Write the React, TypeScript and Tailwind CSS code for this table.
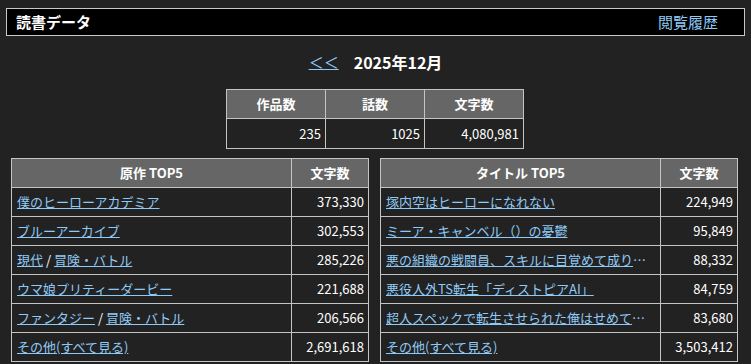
import React from 'react'

const font = { fontFamily: '"Noto Sans CJK JP", "Noto Sans", sans-serif' }

type Row = { parts: string[]; count: string }

const sourceRows: Row[] = [
  { parts: ['僕のヒーローアカデミア'], count: '373,330' },
  { parts: ['ブルーアーカイブ'], count: '302,553' },
  { parts: ['現代', '冒険・バトル'], count: '285,226' },
  { parts: ['ウマ娘プリティーダービー'], count: '221,688' },
  { parts: ['ファンタジー', '冒険・バトル'], count: '206,566' },
  { parts: ['その他(すべて見る)'], count: '2,691,618' },
]

const titleRows: Row[] = [
  { parts: ['塚内空はヒーローになれない'], count: '224,949' },
  { parts: ['ミーア・キャンベル（）の憂鬱'], count: '95,849' },
  { parts: ['悪の組織の戦闘員、スキルに目覚めて成り上がる'], count: '88,332' },
  { parts: ['悪役人外TS転生「ディストピアAI」'], count: '84,759' },
  { parts: ['超人スペックで転生させられた俺はせめて正しく生きたい'], count: '83,680' },
  { parts: ['その他(すべて見る)'], count: '3,503,412' },
]

function RankTable({ title, rows }: { title: string; rows: Row[] }) {
  return (
    <table className="w-[358px] table-fixed border-collapse text-[13px]">
      <thead>
        <tr className="h-[29px] bg-[#666666] text-white font-bold">
          <th className="border border-[#c4c4c4] font-bold">{title}</th>
          <th className="w-[77px] border border-[#c4c4c4] font-bold">文字数</th>
        </tr>
      </thead>
      <tbody>
        {rows.map((r, i) => (
          <tr key={i} className="h-[29px]">
            <td className="border border-[#c4c4c4] px-[5px] truncate text-[#8fcaf6]">
              {r.parts.map((p, j) => (
                <React.Fragment key={j}>
                  {j > 0 && <span className="text-white"> / </span>}
                  <a className="underline cursor-pointer">{p}</a>
                </React.Fragment>
              ))}
            </td>
            <td className="border border-[#c4c4c4] px-[4px] text-right text-white">{r.count}</td>
          </tr>
        ))}
      </tbody>
    </table>
  )
}

export default function App() {
  return (
    <div className="min-h-[364px] bg-[#222222] pt-[8px]" style={font}>
      <div className="ml-[6px] mr-[6px] h-[28px] border border-[#c8c8c8] bg-black flex items-center justify-between pl-[9px] pr-[26px]">
        <span className="text-white font-bold text-[15px]">読書データ</span>
        <a className="text-[#8fcaf6] text-[15px] cursor-pointer">閲覧履歴</a>
      </div>

      <div className="flex items-center justify-center gap-[15px] mt-[15px] h-[22px]">
        <a className="text-[#8fcaf6] underline text-[15px] cursor-pointer">＜＜</a>
        <span className="text-white font-bold text-[16px]">2025年12月</span>
      </div>

      <div className="flex justify-center mt-[16px]">
        <table className="w-[298px] table-fixed border-collapse text-[13px] ml-[-1px]">
          <thead>
            <tr className="h-[29px] bg-[#666666] text-white">
              <th className="border border-[#c4c4c4] font-bold">作品数</th>
              <th className="border border-[#c4c4c4] font-bold">話数</th>
              <th className="border border-[#c4c4c4] font-bold">文字数</th>
            </tr>
          </thead>
          <tbody>
            <tr className="h-[30px] text-white text-right">
              <td className="border border-[#c4c4c4] px-[4px]">235</td>
              <td className="border border-[#c4c4c4] px-[4px]">1025</td>
              <td className="border border-[#c4c4c4] px-[4px]">4,080,981</td>
            </tr>
          </tbody>
        </table>
      </div>

      <div className="flex gap-[11px] pl-[11px] mt-[9px]">
        <RankTable title="原作 TOP5" rows={sourceRows} />
        <RankTable title="タイトル TOP5" rows={titleRows} />
      </div>
    </div>
  )
}
